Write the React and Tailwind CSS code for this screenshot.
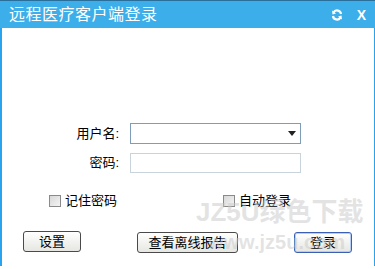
import React from 'react'

const FONT = { fontFamily: '"Liberation Sans", "Noto Sans CJK SC", sans-serif' }

function Check({ label }) {
  return (
    <label className="flex items-center gap-[4px] text-[13px] text-black">
      <span className="w-[12px] h-[12px] border border-[#8a8a8a] bg-gradient-to-br from-[#d8d8d8] to-[#f4f4f4]" />
      {label}
    </label>
  )
}

function Btn({ children, w, primary }) {
  return (
    <button
      className={`h-[21px] ${w} rounded-[3px] border text-[13px] leading-none text-black bg-gradient-to-b from-white to-[#e6e6e2] ${
        primary ? 'border-[#3c5fb6] shadow-[inset_0_0_0_1px_#b6cdf4]' : 'border-[#4a4a4a]'
      }`}
    >
      {children}
    </button>
  )
}

export default function App() {
  return (
    <div className="w-[375px] h-[269px] bg-white relative overflow-hidden" style={FONT}>
      <div className="h-[28px] bg-[#3caeea] border-t border-[#2a6f9a] flex items-center pl-[9px] pr-[9px]">
        <span className="text-white text-[16px] tracking-[0.5px]">远程医疗客户端登录</span>
        <div className="ml-auto flex items-center gap-[14px]">
          <svg width="12" height="12" viewBox="0 0 12 12">
            <path d="M10 5A4 4 0 0 0 2.6 3.4" stroke="white" strokeWidth="2.2" fill="none" />
            <path d="M2 7A4 4 0 0 0 9.4 8.6" stroke="white" strokeWidth="2.2" fill="none" />
            <path d="M1 1.5L1.5 5.5L5 4.5Z" fill="white" />
            <path d="M11 10.5L10.5 6.5L7 7.5Z" fill="white" />
          </svg>
          <span className="text-white text-[14px] font-bold leading-none">X</span>
        </div>
      </div>
      <div className="h-[238px] border-l-2 border-r border-[#2aa3ee] flex flex-col">
        <div className="h-[95px]" />
        <div className="flex items-center">
          <span className="w-[118px] text-right text-[13px] pr-[1px]">用户名:</span>
          <div className="ml-[10px] w-[171px] h-[21px] border border-[#7f9db9] flex items-center justify-end pr-[4px]">
            <svg width="8" height="5" viewBox="0 0 8 5"><path d="M0 0H8L4 5Z" fill="#222" /></svg>
          </div>
        </div>
        <div className="flex items-center mt-[9px]">
          <span className="w-[118px] text-right text-[13px] pr-[1px]">密码:</span>
          <div className="ml-[10px] w-[171px] h-[20px] border border-[#c9d3dc]" />
        </div>
        <div className="flex items-center mt-[18px] pl-[47px]">
          <Check label="记住密码" />
          <div className="ml-[106px]"><Check label="自动登录" /></div>
        </div>
        <div className="flex items-center mt-[19px] pl-[21px]">
          <Btn w="w-[58px]">设置</Btn>
          <div className="ml-[56px]"><Btn w="w-[101px]">查看离线报告</Btn></div>
          <div className="ml-[56px]"><Btn w="w-[58px]" primary>登录</Btn></div>
        </div>
      </div>
      <div className="absolute left-[196px] top-[199px] whitespace-nowrap text-[26px] font-bold leading-none text-[#c8c8c8]/50 pointer-events-none">JZ5U绿色下载</div>
      <div className="absolute left-[208px] top-[232px] whitespace-nowrap text-[20px] font-bold leading-none text-[#c8c8c8]/50 pointer-events-none">www.jz5u.com</div>
    </div>
  )
}
